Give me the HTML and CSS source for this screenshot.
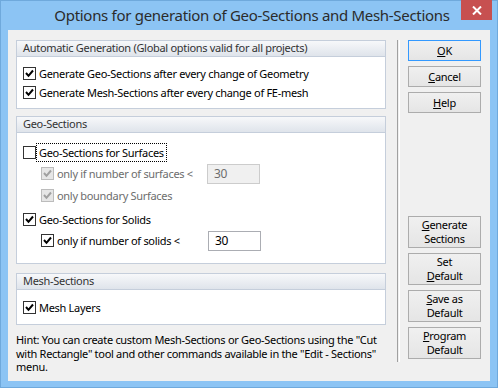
FILE: index.html
```html
<!DOCTYPE html>
<html>
<head>
<meta charset="utf-8">
<link rel="stylesheet" href="styles.css">
</head>
<body>
<div class="window">
  <div class="titlebar">
    <div class="title">Options for generation of Geo-Sections and Mesh-Sections</div>
    <div class="close"><svg width="10" height="9" viewBox="0 0 10 9"><path d="M1 0.5 L9 8.5 M9 0.5 L1 8.5" stroke="#fff" stroke-width="2"/></svg></div>
  </div>
  <div class="client">
    <div class="left">
      <div class="group g1">
        <div class="ghead">Automatic Generation (Global options valid for all projects)</div>
        <div class="gbody">
          <div class="row"><span class="cb checked"><svg viewBox="0 0 11 11"><path d="M2 5 L4.5 7.8 L9 2.5" /></svg></span><span>Generate Geo-Sections after every change of Geometry</span></div>
          <div class="row"><span class="cb checked"><svg viewBox="0 0 11 11"><path d="M2 5 L4.5 7.8 L9 2.5" /></svg></span><span>Generate Mesh-Sections after every change of FE-mesh</span></div>
        </div>
      </div>
      <div class="group g2">
        <div class="ghead">Geo-Sections</div>
        <div class="gbody">
          <div class="row r1"><span class="cb"></span><span class="focus">Geo-Sections for Surfaces</span></div>
          <div class="row r2 sub disabled"><span class="cb checked"><svg viewBox="0 0 11 11"><path d="M2 5 L4.5 7.8 L9 2.5" /></svg></span><span class="lbl">only if number of surfaces &lt;</span><span class="input dis">30</span></div>
          <div class="row r3 sub disabled"><span class="cb checked"><svg viewBox="0 0 11 11"><path d="M2 5 L4.5 7.8 L9 2.5" /></svg></span><span>only boundary Surfaces</span></div>
          <div class="row r4"><span class="cb checked"><svg viewBox="0 0 11 11"><path d="M2 5 L4.5 7.8 L9 2.5" /></svg></span><span>Geo-Sections for Solids</span></div>
          <div class="row r5 sub"><span class="cb checked"><svg viewBox="0 0 11 11"><path d="M2 5 L4.5 7.8 L9 2.5" /></svg></span><span class="lbl">only if number of solids &lt;</span><span class="input">30</span></div>
        </div>
      </div>
      <div class="group g3">
        <div class="ghead">Mesh-Sections</div>
        <div class="gbody">
          <div class="row"><span class="cb checked"><svg viewBox="0 0 11 11"><path d="M2 5 L4.5 7.8 L9 2.5" /></svg></span><span>Mesh Layers</span></div>
        </div>
      </div>
      <div class="hint">Hint: You can create custom Mesh-Sections or Geo-Sections using the "Cut<br>with Rectangle" tool and other commands available in the "Edit - Sections"<br>menu.</div>
    </div>
    <div class="sep"></div>
    <div class="right">
      <div class="btn default"><span><u>O</u>K</span></div>
      <div class="btn"><span><u>C</u>ancel</span></div>
      <div class="btn"><span><u>H</u>elp</span></div>
      <div class="spacer"></div>
      <div class="btn tall"><span><u>G</u>enerate</span><span>Sections</span></div>
      <div class="btn tall"><span>Set</span><span><u>D</u>efault</span></div>
      <div class="btn tall"><span><u>S</u>ave as</span><span>Default</span></div>
      <div class="btn tall"><span><u>P</u>rogram</span><span>Default</span></div>
    </div>
  </div>
</div>
</body>
</html>
```

FILE: styles.css
```css
html, body {
  margin: 0;
  padding: 0;
  background: #8cc4f4;
}
body {
  font-family: "Noto Sans", "DejaVu Sans", sans-serif;
  font-size: 11px;
  letter-spacing: -0.3px;
  color: #000;
}
.window {
  width: 498px;
  height: 388px;
  box-sizing: border-box;
  border: 1px solid #6fa9dc;
  background: #8cc4f4;
  padding: 0 7px 6px 7px;
  display: flex;
  flex-direction: column;
}
.titlebar {
  height: 29px;
  position: relative;
  display: flex;
  justify-content: center;
  align-items: center;
}
.title {
  font-size: 15px;
  letter-spacing: -0.3px;
  color: #2b2b2b;
  margin-top: -2px;
  margin-left: 6px;
}
.close {
  position: absolute;
  right: -2px;
  top: -1px;
  width: 31px;
  height: 20px;
  background: #c75050;
  display: flex;
  align-items: center;
  justify-content: center;
}
.client {
  flex: 1;
  background: #f0f0f0;
  display: flex;
  padding: 10px 9px 0 8px;
  box-sizing: border-box;
}
.left {
  width: 370px;
  display: flex;
  flex-direction: column;
}
.group {
  border: 1px solid #c5cedb;
  background: #fff;
  box-sizing: border-box;
}
.ghead {
  height: 15px;
  line-height: 14px;
  padding-left: 6px;
  color: #333;
  background: linear-gradient(#f7f8fa, #dfe4eb);
  border-bottom: 1px solid #c5cedb;
}
.gbody {
  display: flex;
  flex-direction: column;
  padding-left: 6px;
}
.row {
  display: flex;
  align-items: center;
  height: 13px;
  white-space: nowrap;
}
.cb {
  width: 13px;
  height: 13px;
  box-sizing: border-box;
  border: 1px solid #333;
  background: #fff;
  margin-right: 3px;
  flex: none;
  display: flex;
}
.cb svg {
  width: 11px;
  height: 11px;
}
.cb svg path {
  fill: none;
  stroke: #000;
  stroke-width: 2;
}
.disabled {
  color: #6d6d6d;
}
.disabled .cb {
  border-color: #bcbcbc;
  background: #e6e6e6;
}
.disabled .cb svg path {
  stroke: #a0a0a0;
}
.focus {
  outline: 1px dotted #000;
  outline-offset: 1px;
  padding: 0 1px;
  margin-left: -1px;
}
.g1 {
  height: 69px;
}
.g1 .gbody {
  padding-top: 10px;
  gap: 6px;
}
.g2 {
  height: 148px;
  margin-top: 7px;
}
.g2 .gbody {
  padding-top: 13px;
}
.sub {
  padding-left: 18px;
}
.lbl {
  width: 150px;
}
.r2 { margin-top: 8px; }
.r3 { margin-top: 9px; }
.r4 { margin-top: 11px; }
.r5 { margin-top: 8px; }
.input {
  width: 53px;
  height: 20px;
  box-sizing: border-box;
  border: 1px solid #abadb3;
  background: #fff;
  padding-left: 6px;
  line-height: 18px;
  color: #000;
  font-size: 12px;
}
.input.dis {
  border-color: #cccccc;
  background: #f0f0f0;
  color: #6d6d6d;
}
.r5 .lbl {
  width: 151px;
}
.g3 {
  height: 52px;
  margin-top: 9px;
}
.g3 .gbody {
  padding-top: 11px;
}
.hint {
  margin-top: 8px;
  line-height: 13.5px;
  color: #000;
  white-space: nowrap;
}
.sep {
  width: 1px;
  margin: 0 0 19px 11px;
  border-left: 1px solid #a0a0a0;
  border-right: 1px solid #ffffff;
}
.right {
  margin-left: 8px;
  width: 73px;
  display: flex;
  flex-direction: column;
}
.btn {
  height: 21px;
  box-sizing: border-box;
  border: 1px solid #acacac;
  background: linear-gradient(#f0f0f0, #e5e5e5);
  display: flex;
  flex-direction: column;
  align-items: center;
  justify-content: center;
  margin-bottom: 5px;
  line-height: 14px;
}
.btn.default {
  border-color: #3399ff;
}
.btn.tall {
  height: 32px;
  margin-bottom: 5px;
}
.spacer {
  height: 98px;
}
```
